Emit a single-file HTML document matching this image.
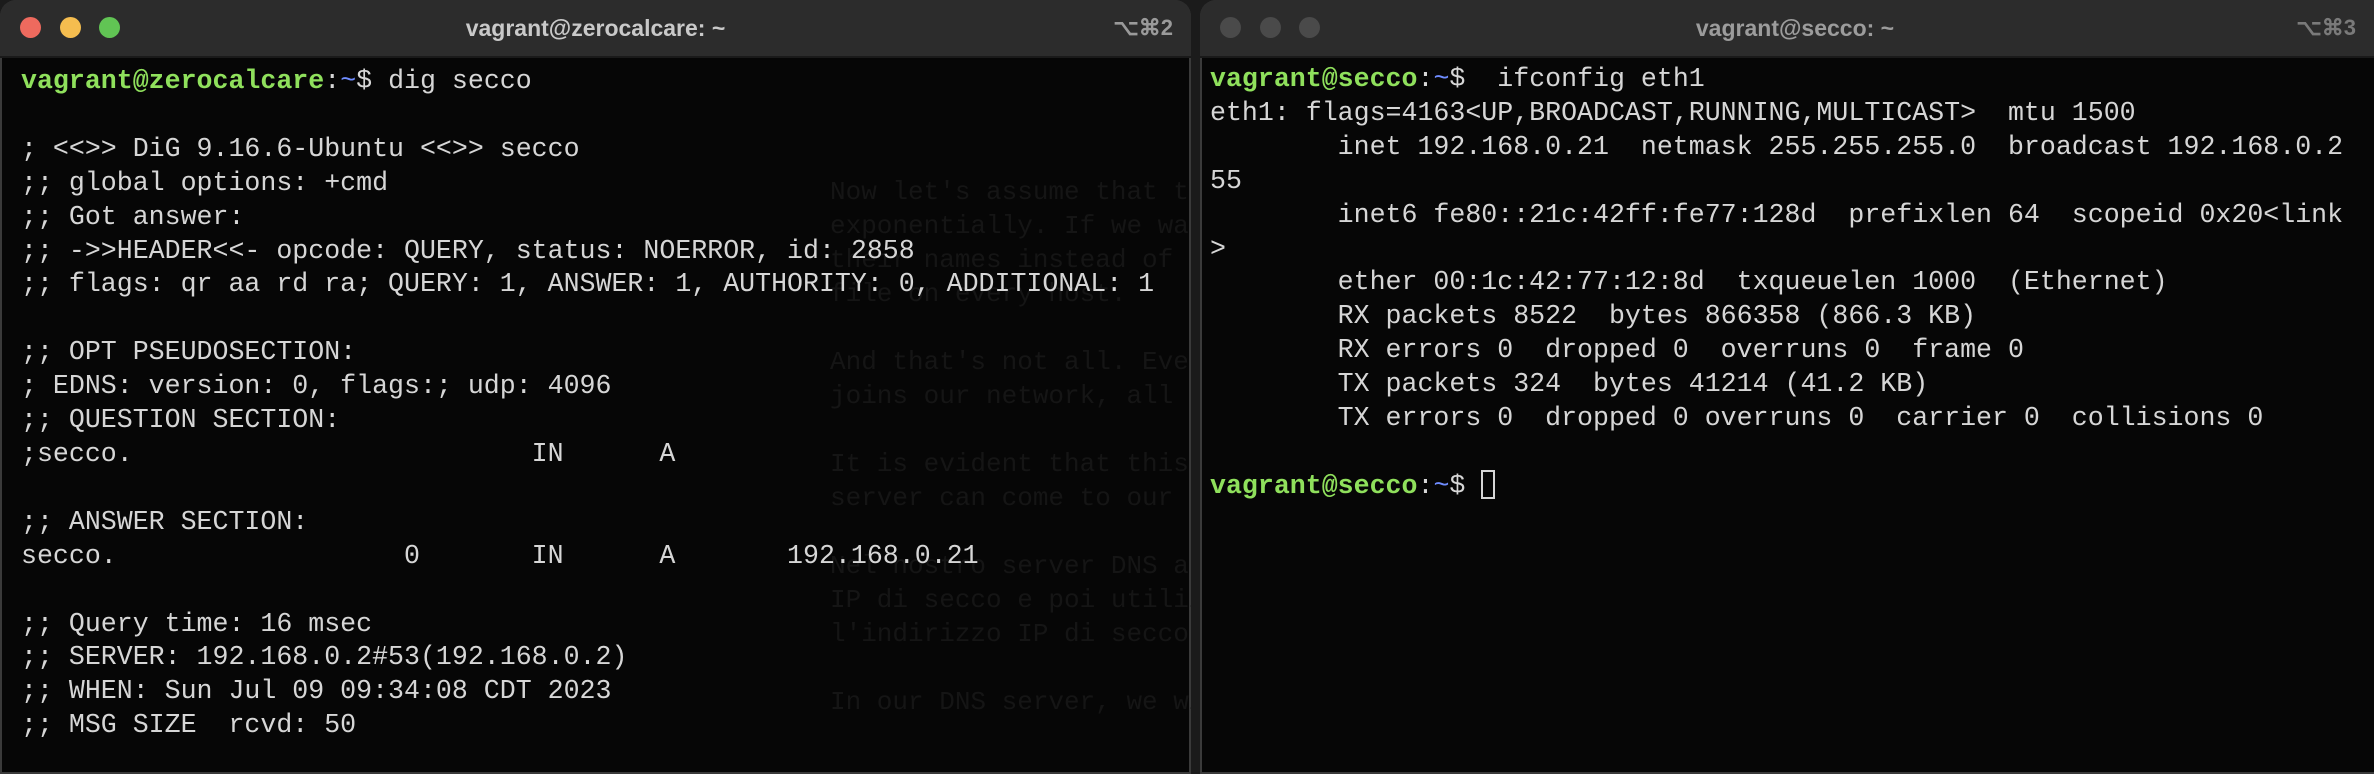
<!DOCTYPE html>
<html><head><meta charset="utf-8"><style>
html,body{margin:0;padding:0;width:2374px;height:774px;overflow:hidden;background:#1b1b1b;}
.win{position:absolute;top:0;height:774px;background:#060606;border-radius:16px 16px 0 0;overflow:hidden;box-shadow:0 0 0 2px #3a3a3a inset;}
.tb{position:absolute;left:0;right:0;top:0;height:56px;background:#2c2c2c;border-bottom:2px solid #1a1a1a;font-family:"Liberation Sans",sans-serif;font-weight:bold;font-size:23px;text-align:center;line-height:56px;}
.dot{position:absolute;top:17px;width:21px;height:21px;border-radius:50%;}
.sc{position:absolute;right:18px;top:0;font-weight:bold;font-size:22px;}
pre{position:absolute;margin:0;font-family:"Liberation Mono",monospace;font-size:26.6px;line-height:33.9px;color:#d6d6d6;white-space:pre;}
.g{color:#8fe05c;font-weight:bold}.b{color:#6f8cff}
.cur{display:inline-block;width:14px;height:29px;border:2px solid #d6d6d6;vertical-align:-6px;box-sizing:border-box}
.faint{position:absolute;font-family:"Liberation Mono",monospace;font-size:26px;color:#151515;white-space:pre;line-height:34px}
</style></head><body>
<div class="win" style="left:0;width:1191px;">
  <div class="faint" style="left:830px;top:175px;">Now let's assume that the
exponentially. If we want
their names instead of IP
file on every host.

And that's not all. Every
joins our network, all th

It is evident that this s
server can come to our re

Nel nostro server DNS and
IP di secco e poi utilizz
l'indirizzo IP di secco.

In our DNS server, we wil</div>
  <div class="tb" style="color:#c9c9c9">
    <div class="dot" style="left:20px;background:#ee6a5e"></div>
    <div class="dot" style="left:60px;background:#f5bd4f"></div>
    <div class="dot" style="left:99px;background:#61c454"></div>
    vagrant@zerocalcare: ~<span class="sc" style="color:#9a9a9a">⌥⌘2</span>
  </div>
<pre style="left:21px;top:65px;"><span class="g">vagrant@zerocalcare</span>:<span class="b">~</span>$ dig secco

; &lt;&lt;&gt;&gt; DiG 9.16.6-Ubuntu &lt;&lt;&gt;&gt; secco
;; global options: +cmd
;; Got answer:
;; -&gt;&gt;HEADER&lt;&lt;- opcode: QUERY, status: NOERROR, id: 2858
;; flags: qr aa rd ra; QUERY: 1, ANSWER: 1, AUTHORITY: 0, ADDITIONAL: 1

;; OPT PSEUDOSECTION:
; EDNS: version: 0, flags:; udp: 4096
;; QUESTION SECTION:
;secco.                         IN      A

;; ANSWER SECTION:
secco.                  0       IN      A       192.168.0.21

;; Query time: 16 msec
;; SERVER: 192.168.0.2#53(192.168.0.2)
;; WHEN: Sun Jul 09 09:34:08 CDT 2023
;; MSG SIZE  rcvd: 50</pre>
</div>
<div class="win" style="left:1200px;width:1190px;">
  <div class="tb" style="color:#9c9c9c">
    <div class="dot" style="left:20px;background:#4a4a4a"></div>
    <div class="dot" style="left:60px;background:#4a4a4a"></div>
    <div class="dot" style="left:99px;background:#4a4a4a"></div>
    vagrant@secco: ~<span class="sc" style="right:34px;color:#7a7a7a">⌥⌘3</span>
  </div>
<pre style="left:10px;top:63px;"><span class="g">vagrant@secco</span>:<span class="b">~</span>$  ifconfig eth1
eth1: flags=4163&lt;UP,BROADCAST,RUNNING,MULTICAST&gt;  mtu 1500
        inet 192.168.0.21  netmask 255.255.255.0  broadcast 192.168.0.2
55
        inet6 fe80::21c:42ff:fe77:128d  prefixlen 64  scopeid 0x20&lt;link
&gt;
        ether 00:1c:42:77:12:8d  txqueuelen 1000  (Ethernet)
        RX packets 8522  bytes 866358 (866.3 KB)
        RX errors 0  dropped 0  overruns 0  frame 0
        TX packets 324  bytes 41214 (41.2 KB)
        TX errors 0  dropped 0 overruns 0  carrier 0  collisions 0

<span class="g">vagrant@secco</span>:<span class="b">~</span>$ <span class="cur"></span></pre>
</div>
</body></html>
